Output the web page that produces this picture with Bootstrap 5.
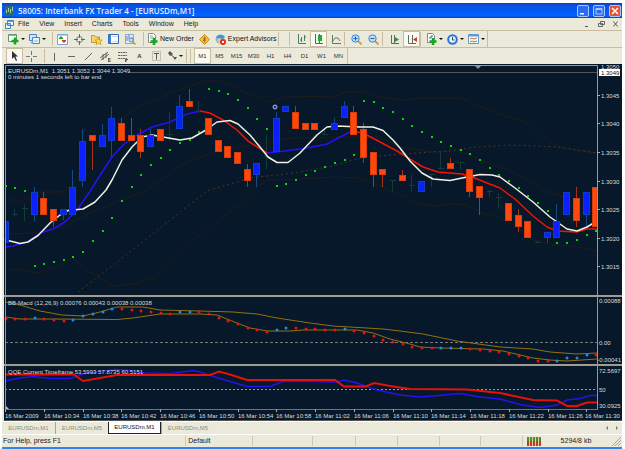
<!DOCTYPE html>
<html lang="en">
<head>
<meta charset="utf-8">
<meta name="viewport" content="width=device-width, initial-scale=1">
<title>Interbank FX Trader 4</title>
<link href="https://cdn.jsdelivr.net/npm/bootstrap@5.3.0/dist/css/bootstrap.min.css" rel="stylesheet">
<style>
:root{--face:#ebe9da;--edge:#c9bda0;--navy:#061829}
body{font-family:"Liberation Sans",sans-serif;font-size:7px;line-height:10px;color:#222;background:#fff;padding:3px 3px 0 2px}
button{border:0;background:none;padding:0;color:inherit;font:inherit;white-space:nowrap}
svg{display:block}
.titlebar{height:15px;background:linear-gradient(#0a3fc4 0,#0a55e6 3px,#0558ee 8px,#0064ff 11px,#0060fa 13px,#0440b8);color:#e4ecff;padding:0 1px 0 3px}
.titlebar h1{font-family:"Open Sans",sans-serif;font-size:8px;line-height:14px;margin:0;font-weight:600}
.winbtn{width:12px;height:12px;border:1px solid #a9c6ff;border-radius:2px;background:#2a6bf0}
.winbtn-close{background:#e4512f}
.menubar{height:12px;background:var(--face);padding:0 3px}
.menubar button{line-height:12px}
.menus{gap:10px}
.toolrow{height:17px;background:var(--face);padding-left:4px;border-top:1px solid var(--edge)}
.toolset{height:16px;border-right:1px solid var(--edge)}
.tool{width:17px;height:16px;display:flex;align-items:center;justify-content:center}
.tool-menu{width:21px;height:16px;display:flex;align-items:center;justify-content:center;gap:2px}
.tool-menu::after{content:"";border:2px solid transparent;border-top-color:#111;border-bottom:0}
.tool-text{height:16px;display:flex;align-items:center;gap:2px;padding:0 2px;color:#111}
.pressed{background:#f9f8f2;border:1px solid var(--edge)}
.frames .tool{font-size:6px;color:#333}
.sep{width:4px;height:14px;border-left:1px solid var(--edge)}
.sep-wide{width:11px}
.sep-tight{width:2px;margin-left:4px}
.charts{background:var(--face);padding-left:2px}
.charts svg{width:100%;height:auto;background:var(--navy)}
.charts text{font-size:6px;fill:#dcdcdc}
.tabstrip{height:13px;background:var(--face);border-top:1px solid #fff;font-size:6px;color:#8b8979}
.tabstrip button{width:53px;height:12px;line-height:11px}
.tabstrip button + button{border-left:1px solid #a9a696}
.tabstrip .tab-on{background:#fff;color:#111;border:1px solid #222;border-top:0}
.status{height:13px;background:var(--face);border-top:1px solid #fff}
.status > div{border-right:1px solid #cfc9b4;height:10px;white-space:nowrap}
.status > div:last-child{border-right:0}
.s-help{flex:188 1 0;padding-left:1px}.s-def{flex:66 1 0;padding-left:2px}.s-a{flex:61 1 0}.s-b{flex:43 1 0}.s-c{flex:42 1 0}.s-net{flex:97 1 0;padding:0 1px 0 4px}
.desk{height:2px;background:#3186ee}
</style>
</head>
<body>
<header>
 <div class="titlebar d-flex align-items-center gap-1">
  <svg width="9" height="9" viewBox="0 0 9 9"><path d="M0 0h9v9H0z" fill="#2c6d63"/><path d="M1 7V4h1v3zM3 6V2h1v4zM5 7V3h1v4zM7 5V1h1v4z" fill="#9fd0a8"/></svg>
  <h1 class="flex-grow-1">58005: Interbank FX Trader 4 - [EURUSDm,M1]</h1>
  <div class="d-flex gap-1">
   <button class="winbtn" aria-label="Minimize"><svg width="10" height="10"><path d="M2 7h4v1.500H2z" fill="#fff"/></svg></button>
   <button class="winbtn" aria-label="Restore"><svg width="10" height="10"><path d="M2 2.500h6v5.500H2zM2 3.500h6" fill="none" stroke="#a9cbff"/></svg></button>
   <button class="winbtn winbtn-close" aria-label="Close"><svg width="10" height="10"><path d="M2 2l6 6M8 2l-6 6" stroke="#fff" stroke-width="1.500"/></svg></button>
  </div>
 </div>
 <nav class="menubar d-flex align-items-center" aria-label="Main menu">
  <svg class="me-1" width="9" height="9" viewBox="0 0 9 9"><path d="M2.500.5h6v5h-6zM.5 3.500h5v5h-5z" fill="#f5faff" stroke="#3f7fc4"/><path d="M2.500 1.500h6M.5 4h5" stroke="#5d9ae0"/></svg>
  <div class="d-flex flex-grow-1 menus"><button>File</button><button>View</button><button>Insert</button><button>Charts</button><button>Tools</button><button>Window</button><button>Help</button></div>
  <div class="d-flex gap-2">
   <button aria-label="Minimize chart"><svg width="6" height="8"><path d="M1 6.500h3" stroke="#555"/></svg></button>
   <button aria-label="Restore chart"><svg width="7" height="8"><path d="M2.500 1.500h4v3h-4zM.5 3.500h4v3h-4z" fill="none" stroke="#666"/></svg></button>
   <button aria-label="Close chart"><svg width="6" height="8"><path d="M.5 1.500l4 5M4.500 1.500l-4 5" stroke="#555"/></svg></button>
  </div>
 </nav>
 <div class="toolrow d-flex" role="toolbar" aria-label="Standard">
  <div class="toolset d-flex align-items-center">
  <button class="tool-menu" aria-label="New chart"><svg width="11" height="12"><path d="M.5 1.500h8v7h-8z" fill="#fff" stroke="#5b9a68"/><path d="M1 2.500h7" stroke="#79b7e0"/><path d="M7 4.500v7M3.500 8h7" stroke="#12a71d" stroke-width="2.500"/></svg></button>
  <button class="tool-menu" aria-label="Profiles"><svg width="11" height="12"><path d="M.5 1.500h7v6h-7z" fill="#cfe5fa" stroke="#4a86c8"/><path d="M3.500 4.500h7v6h-7z" fill="#e8f3fd" stroke="#4a86c8"/><path d="M2 9h2v1H2zM5 8h4" fill="#3c7bd0" stroke="#8bb6e4"/></svg></button>
  <span class="sep sep-tight"></span>
  <button class="tool" aria-label="Market watch"><svg width="11" height="11"><path d="M.5.5h10v10H.5z" fill="#fff" stroke="#7ba6d2"/><path d="M1 1.500h9" stroke="#b8d5ef"/><path d="M2 4l2-2 2 2v1H2z" fill="#18a32e"/><path d="M5 6h4v1L7 9 5 7z" fill="#dd3524"/></svg></button>
  <button class="tool" aria-label="Data window"><svg width="11" height="11"><circle cx="5.500" cy="5.500" r="3" fill="none" stroke="#777"/><path d="M5.500 0v4M5.500 7v4M0 5.500h4M7 5.500h4" stroke="#666"/></svg></button>
  <button class="tool" aria-label="Navigator"><svg width="12" height="11"><path d="M.5 8.500v-7h3l1 1.500h4v5.500z" fill="#f8d775" stroke="#c89632"/><path d="M7.500 3.500l1 2.400 2.700.2-2 1.700.6 2.700-2.300-1.400-2.300 1.400.6-2.700-2-1.700 2.700-.2z" fill="#ffdf4c" stroke="#c08a16" stroke-width=".7"/></svg></button>
  <button class="tool" aria-label="Terminal"><svg width="11" height="10"><path d="M.5.5h10v9H.5z" fill="#fff" stroke="#2e6cbc"/><path d="M1 1h2v8H1z" fill="#3c82d8"/><path d="M4 2.500h6M4 7.500h6" stroke="#c8dcf2"/></svg></button>
  <button class="tool" aria-label="Strategy tester"><svg width="11" height="11"><path d="M.5.5h8v9h-8z" fill="#e4eef8" stroke="#86a8cb"/><path d="M2 2v5M4 1v4M7 3v3" stroke="#6080b0"/><circle cx="6" cy="6" r="2" fill="#cfe6fb" stroke="#5a87b4"/><path d="M7.500 7.500l3 3" stroke="#c29a2a" stroke-width="1.500"/></svg></button>
  <span class="sep sep-tight"></span>
  <button class="tool-text"><svg width="11" height="12"><path d="M1.500.5h5l2 2v7h-7z" fill="#fff" stroke="#7c8c86"/><path d="M3 3h3M3 5h4" stroke="#8ca08e"/><path d="M7 5v7M3.500 8.500h7" stroke="#12a71d" stroke-width="2.500"/></svg>New Order</button>
  <button class="tool" aria-label="MetaEditor"><svg width="11" height="11"><path d="M5.500.5l5 5-5 5-5-5z" fill="#f2c046" stroke="#c98b1c"/><path d="M5.500 2.500v6M4 4.500l3 2M7 4L4 7" stroke="#9a5a10" stroke-width=".8"/></svg></button>
  <button class="tool-text"><svg width="11" height="11"><circle cx="5" cy="5" r="4.500" fill="#86b8e6"/><path d="M1 4c2-4 7-4 9-1L7 5 3 4z" fill="#4e8fcf"/><path d="M2 6l3-2 2 2-3 3z" fill="#f0cd68"/><circle cx="8" cy="8" r="3" fill="#e2301e"/><path d="M7 7h2v2H7z" fill="#fff"/></svg>Expert Advisors</button>
  <span class="sep sep-wide"></span><span class="sep"></span>
  <button class="tool" aria-label="Bar chart"><svg width="10" height="11"><path d="M1.500 0v9.500H9M4.500 3v5M7.500 1v6M3 6h1M8 3h1" fill="none" stroke="#4d7d59"/></svg></button>
  <button class="tool pressed" aria-label="Candlesticks"><svg width="10" height="11"><path d="M1.500 0v9.500H9M5.500 0v9" fill="none" stroke="#3c7748"/><path d="M4 1h4v6H4z" fill="#18b22e"/></svg></button>
  <button class="tool" aria-label="Line chart"><svg width="10" height="11"><path d="M1.500 1v8.500H10M1 8l3-4 3 0 2 3" fill="none" stroke="#5b7d5e"/></svg></button>
  <span class="sep"></span>
  <button class="tool" aria-label="Zoom in"><svg width="11" height="11"><path d="M6.500 6.500l4 4" stroke="#d5a52e" stroke-width="2"/><circle cx="4.500" cy="4.500" r="3.700" fill="#b8dcfa" stroke="#4386d0"/><path d="M2.500 4.500h4M4.500 2.500v4" stroke="#2360b8"/></svg></button>
  <button class="tool" aria-label="Zoom out"><svg width="11" height="11"><path d="M6.500 6.500l4 4" stroke="#d5a52e" stroke-width="2"/><circle cx="4.500" cy="4.500" r="3.700" fill="#b8dcfa" stroke="#4386d0"/><path d="M2.500 4.500h4" stroke="#2360b8"/></svg></button>
  <span class="sep"></span>
  <button class="tool" aria-label="Auto scroll"><svg width="10" height="11"><path d="M1.500 1v8.500H9M4.500 1v8" fill="none" stroke="#5c6d60"/><path d="M5 3l4 2.500L5 8z" fill="#18a32e"/></svg></button>
  <button class="tool pressed" aria-label="Chart shift"><svg width="10" height="11"><path d="M1.500 1v8.500H9M5.500 1v8" fill="none" stroke="#5c6d60"/><path d="M10 3L6 5.500 10 8z" fill="#d43a22"/></svg></button>
  <span class="sep"></span>
  <button class="tool-menu" aria-label="Indicators"><svg width="11" height="12"><path d="M1.500.5h5l2 2v7h-7z" fill="#fff" stroke="#7c8c86"/><path d="M3 5h2v-2h2" fill="none" stroke="#557"/><path d="M7 5v7M3.500 8.500h7" stroke="#12a71d" stroke-width="2.500"/></svg></button>
  <button class="tool-menu" aria-label="Periods"><svg width="11" height="11"><circle cx="5.500" cy="5.500" r="4.300" fill="#eaf4ff" stroke="#2d72cf" stroke-width="2"/><path d="M5.500 3v3h2" fill="none" stroke="#345"/></svg></button>
  <button class="tool-menu" aria-label="Templates"><svg width="11" height="10"><path d="M.5.5h10v9H.5z" fill="#fff" stroke="#6b96c4"/><path d="M1 1.500h9" stroke="#5a9ae0" stroke-width="2"/><path d="M2 5l2-1 2 1 3-1" fill="none" stroke="#d4643a"/><path d="M2 8l2-1 2 1 3-1" fill="none" stroke="#41a355"/></svg></button>
  </div>
 </div>
 <div class="toolrow d-flex" role="toolbar" aria-label="Drawing and periods">
  <div class="toolset frames d-flex align-items-center">
  <button class="tool pressed" aria-label="Cursor"><svg width="8" height="11"><path d="M1 0v8l2-2 2 4 1-.5-1.500-4H7z" fill="#333"/></svg></button>
  <button class="tool" aria-label="Crosshair"><svg width="11" height="11"><path d="M5.500 0v4M5.500 7v4M0 5.500h4M7 5.500h4" stroke="#777"/></svg></button>
  <span class="sep sep-tight"></span>
  <button class="tool" aria-label="Vertical line"><svg width="9" height="9"><path d="M4.500 1v8" stroke="#666"/></svg></button>
  <button class="tool" aria-label="Horizontal line"><svg width="9" height="9"><path d="M1 4.500h7" stroke="#666"/></svg></button>
  <button class="tool" aria-label="Trendline"><svg width="9" height="9"><path d="M1 8l7-7" stroke="#666"/></svg></button>
  <button class="tool" aria-label="Equidistant channel"><svg width="11" height="11"><path d="M0 7l8-6M1 9l8-6M3 3v6M6 2v5M8.500 7.500h2M8.500 9h2M8.500 10.500h2M8.500 7v4" stroke="#555" stroke-width=".9"/></svg></button>
  <button class="tool" aria-label="Fibonacci retracement"><svg width="10" height="11"><path d="M0 1.500h9M0 4.500h9M0 7.500h9" stroke="#666" stroke-dasharray="2 .5"/><path d="M7.500 11V8.500H10M7.500 10H9" fill="none" stroke="#555"/></svg></button>
  <button class="tool fw-bold">A</button>
  <button class="tool" aria-label="Text label"><svg width="9" height="10"><path d="M.5.5h8v9h-8z" fill="none" stroke="#999" stroke-dasharray="1 1"/><path d="M2 2.500h5M4.500 2.500v6" stroke="#555"/></svg></button>
  <button class="tool-menu" aria-label="Arrows"><svg width="9" height="10"><path d="M0 2l2-2 3 3-3 2zM5 6h4L7 9z" fill="#555"/><path d="M2 3l5 4" stroke="#555"/></svg></button>
  <span class="sep"></span><span class="sep"></span>
  <button class="tool pressed">M1</button><button class="tool">M5</button><button class="tool">M15</button><button class="tool">M30</button><button class="tool">H1</button><button class="tool">H4</button><button class="tool">D1</button><button class="tool">W1</button><button class="tool">MN</button>
  </div>
 </div>
</header>

<main class="charts">
 <svg viewBox="4 64 618 233" role="img" aria-label="EURUSDm M1 price chart">
  <g fill="none" stroke="#221c18">
   <path d="M5 197L17 202 27 198 35 192H63L78 178 92 155 117 122 133 110 150 102 167 95 187 87 205 81 218 81 230 84 250 95 270 102 287 96 333 97 347 92H363L387 98 400 100 423 98H460L473 103 500 115 520 120 530 125 543 138 560 147 575 150 597 153"/>
   <path d="M5 270L17 269 37 273 57 267 72 258 90 272 113 286 133 284 157 277 173 262 190 243 210 227 235 208 247 198 257 187 267 180 300 179 333 177 360 178 383 187 400 195 417 203 432 206 450 204 467 205 483 213 500 218 517 227 533 240 550 244 577 247 597 251"/>
   <path d="M5 234L33 233 63 227 90 213 147 190 180 166 200 157 220 150 267 143 290 138 343 137 380 137 400 147 433 152 460 151 483 161 507 170 527 180 550 193 567 198"/>
   <path d="M78 292L117 262 160 228 207 191 220 187 250 178 293 173 333 166 360 158 400 154 447 151 477 147 510 145 557 147 597 153" stroke="#4a3524" stroke-dasharray="2 3"/>
  </g>
  <g id="wicks"></g>
  <g fill="none" stroke-width="1.500" stroke-linejoin="round">
   <path stroke="#2a10f0" d="M5 247L13 246 27 242 40 233 53 229 65 222 77 210 91 190 97 180 112 157 123 145 137 135 152 127 170 122 187 114 200 111M267 153L285 151 307 148 327 144 340 137 350 132 354 131.500"/>
   <path stroke="#f01408" d="M200 111L210 113 223 120 237 130 248 141 267 153M354 131.500L363 133 380 142 397 151 410 159 423 167 438 172 462 174 472 177 487 183 500 188 515 199 533 216 547 227 557 231 577 232 587 229 597 229"/>
   <path stroke="#f4f0e4" d="M5 239L8 240.500 20 243.500 28 242 38 235.500 50 223 60 215 68 210.500 83 209 95 202 106 190 112 180 122 160 132 147 142 137 152 135 163 137 180 140 192 138 206 130 217 122 230 120.500 238 124 250 135 260 147 268 157 277 162.500H288L300 153 317 135 327 127 337 126 360 127H373L383 130.500 393 140 400 148 410 161 422 173 433 179 450 180.500 467 177 480 174.500 492 175 500 177 515 188 533 202 550 217 567 229 577 231 587 227 597 221"/>
  </g>
  <g id="bodies"></g>
  <g id="sar" fill="#08d808"></g>
  <circle cx="275" cy="107" r="2" fill="#2020d0" stroke="#bbb"/>
  <path d="M5 72.500H598" stroke="#555"/>
  <path d="M475 66h6l-3 3z" fill="#8c9099"/>
  <path d="M5.500 297V65.500H597.500V297" fill="none" stroke="#9a9890"/>
  <path d="M4 296H622" stroke="#a09c90" stroke-width="2"/>
  <path d="M597 95.500h3M597 123.500h3M597 152.500h3M597 181.500h3M597 209.500h3M597 238.500h3M597 266.500h3" stroke="#aaa"/>
  <text x="601" y="69">1.3050</text>
  <path d="M599 69h21v7h-21z" fill="#fff"/><text x="601" y="75" style="fill:#111">1.3049</text>
  <text x="601" y="98">1.3045</text><text x="601" y="126">1.3040</text><text x="601" y="155">1.3035</text><text x="601" y="184">1.3030</text><text x="601" y="212">1.3025</text><text x="601" y="241">1.3020</text><text x="601" y="269">1.3015</text>
  <path d="M7 67h121v7H7z" fill="#061829"/>
  <text x="8" y="73">EURUSDm,M1&#160; 1.3051 1.3052 1.3044 1.3049</text>
  <text x="8" y="79">0 minutes 1 seconds left to bar end</text>
 </svg>
 <svg viewBox="4 297 618 69" role="img" aria-label="BB-Macd indicator">
  <path d="M5 342.500H598" stroke="#77797a" stroke-dasharray="3 2"/>
  <g fill="none" stroke="#94710c">
   <path d="M5 302L20 305 40 311 62 315 83 316 100 312 117 307 143 307 160 310 200 311 233 312 257 314 277 318 310 323 333 326 383 329 400 331 423 334 457 341 500 347 533 349 550 352 577 354 597 353"/>
   <path d="M5 317L20 319H53L117 319.500 133 318 160 314H200L217 315 237 323 250 328 267 331H290L303 330H357L373 333 390 339 410 344 420 347 440 348 483 349 503 351 533 358 550 360 567 361 597 359"/>
  </g>
  <g id="macd"></g>
  <path d="M5.500 297V366M597.500 297V366" stroke="#9a9890"/>
  <path d="M4 365H622" stroke="#a09c90" stroke-width="2"/>
  <text x="8" y="305">BB-Macd (12,26,9) 0.00076 0.00043 0.00038 0.00038</text>
  <text x="599" y="303">0.00088</text><text x="599" y="345">0.00</text><text x="621" y="362" text-anchor="end">-0.00041</text>
 </svg>
 <svg viewBox="4 366 618 55" role="img" aria-label="QQE indicator">
  <path d="M5 389.500H598" stroke="#a0a0a0" stroke-dasharray="2 2"/>
  <path fill="none" stroke="#2412f0" stroke-width="1.500" d="M5 381L20 378 33 376.500 50 378.500H70L83 374 115 369.500 130 370.500 145 373 170 373.500 193 370.500 200 372 215 377 247 386.500H270L283 381.500H305L337 382 344 380 357 383 377 390 400 395 420 397 433 396 460 393.500 480 397 500 399 520 404.500 540 407.500 557 405 567 400 580 398.500 590 395.500H597"/>
  <path fill="none" stroke="#e81008" stroke-width="2" d="M5 374.500H74L83 381 117 375H210L219 371.500 230 374.500 247 380H335L344 386.500H366L374 383 390 386 410 389 467 389.500 500 393 533 400 557 400.500 567 406H577L587 402.500H597"/>
  <text x="8" y="374">QQE Current Timeframe 53.5993 57.8735 60.5151</text>
  <path d="M5.500 366V409.500M597.500 366V409.500" stroke="#9a9890"/><path d="M5 409.500H598" stroke="#77736c"/>
  <path d="M6 406v3h3z" fill="#bbb"/>
  <text x="599" y="373">72.5697</text><text x="599" y="392">50</text><text x="599" y="408">30.0925</text>
  <g id="times"></g>
  <path d="M4 420.500H622" stroke="#555"/>
 </svg>
</main>

<footer>
 <div class="tabstrip d-flex" role="tablist">
  <button role="tab">EURUSDm,M1</button><button role="tab">EURUSDm,M5</button><button role="tab" class="tab-on" aria-selected="true">EURUSDm,M1</button><button role="tab">EURUSDm,M5</button>
  <span class="flex-grow-1"></span>
  <svg width="20" height="12"><path d="M6 4v4L4 6zM14 4v4l2-2z" fill="#777"/></svg>
 </div>
 <div class="status d-flex align-items-center">
  <div class="s-help">For Help, press F1</div><div class="s-def">Default</div><div class="s-a"></div><div class="s-b"></div><div class="s-c"></div><div class="s-c"></div><div class="s-c"></div><div class="s-c"></div>
  <div class="s-net d-flex align-items-center justify-content-between">
   <svg width="14" height="9"><path d="M0 0h14v4H0z" fill="#4f8e2e"/><path d="M0 4h14v5H0z" fill="#c43a22"/><path d="M2.500 0v9M5.500 0v9M8.500 0v9M11.500 0v9" stroke="#d8d0a8"/></svg>
   <span>5294/8 kb</span>
   <svg width="10" height="10"><path d="M1 10l9-9M4 10l6-6M7 10l3-3" stroke="#aca899"/></svg>
  </div>
 </div>
 <div class="desk"></div>
</footer>
<script src="https://cdn.jsdelivr.net/npm/bootstrap@5.3.0/dist/js/bootstrap.bundle.min.js"></script>
<script>
// One row per minute: kind (b = up, o = down, d = doji), body top, body bottom, high, low
const candles = [
 'b 221 243 209 243','d 215 215 209 216','d 209 209 204 221','b 192 215 187 221','o 198 215 192 215','o 209 221 209 227','b 209 215 209 220','b 187 215 170 215',
 'b 141 181 129 187','o 135 141 135 170','b 135 147 124 147','b 118 141 107 157','o 123 141 118 141','o 135 141 118 141','o 135 152 129 158','b 135 147 129 147',
 'o 129 141 129 141','d 135 135 112 141','b 106 129 95 129','o 101 107 89 107','d 112 112 101 113','o 118 135 118 135','o 140 152 140 152','o 146 158 146 158',
 'o 152 164 152 164','o 169 181 164 187','b 163 175 163 187','d 157 157 135 169','b 118 152 112 152','b 106 112 106 112','o 112 129 106 129','o 123 130 123 130',
 'o 123 130 123 130','d 135 135 129 135','b 123 130 118 130','b 106 118 101 118','o 112 135 106 135','o 129 158 123 163','o 152 175 152 187','o 169 175 169 187',
 'd 181 181 181 191','o 175 181 170 181','d 186 186 175 192','b 181 192 181 192','d 175 175 175 187','d 169 169 151 169','o 163 169 158 169','d 163 163 163 169',
 'o 169 192 169 197','o 186 198 186 215','d 192 192 190 197','d 198 198 193 209','o 203 221 203 221','o 215 227 209 232','o 221 238 221 238','d 243 243 240 243',
 'b 232 238 232 243','b 221 238 204 238','b 192 215 192 215','o 198 221 187 227','b 192 215 192 227','o 187 227 187 227'];
const sar = [186,188,191,266,264,262,260,257,252,241,231,218,201,187,175,165,158,150,143,140,132,89,91,94,100,108,119,129,186,184,180,175,171,167,163,160,155,101,102,108,112,119,126,132,137,142,146,150,154,160,168,175,181,188,196,203,211,243,243,240,235,231];
const macd = 'r319 r319 r319 b318 r319 r320 r321 b320 b316 b314 b312 b309 r309 r310 r311 r312 r313 r314 b312 b312 r312 r314 r318 r321 r324 r328 r330 r332 b330 b328 r328 r329 r329 r330 r330 b329 r331 r333 r336 r340 r342 r344 r347 r348 r348 b348 b348 b348 r349 r350 r351 r352 r354 r356 r358 r361 r361 b361 b358 b358 b355 r355'.split(' ');
const px = i => Math.round(5.7 + 9.68 * i);
const put = (id, s) => document.getElementById(id).innerHTML = s;
const wickColor = {b: '#144a82', o: '#a83414', d: '#123c38'};
let wicks = '', bodies = '';
candles.forEach((row, i) => {
  const [k, t, b, h, l] = row.split(' ');
  const x = px(i);
  wicks += `<path d="M${x - .5} ${h}V${l}" stroke="${wickColor[k]}"/>`;
  if (k === 'd') { wicks += `<path d="M${x - 3} ${t - .5}h6" stroke="${wickColor.d}"/>`; return; }
  const left = Math.max(x - 3.5, 6), right = Math.min(x + 2.5, 597);
  bodies += `<rect x="${left}" y="${+t + .5}" width="${right - left}" height="${b - t - 1}" fill="${k === 'b' ? '#0a20ff' : '#ff480c'}" stroke="${k === 'b' ? '#0f3fc0' : '#d83c0c'}"/>`;
});
put('wicks', wicks);
put('bodies', bodies);
put('sar', sar.map((y, i) => `<rect x="${px(i) - 1}" y="${y - 1}" width="2" height="2"/>`).join(''));
put('macd', macd.map((m, i) => `<circle cx="${px(i)}" cy="${m.slice(1)}" r="1.500" fill="${m[0] === 'r' ? '#f01010' : '#2088f0'}"/>`).join(''));
const labels = ['2009','10:34','10:38','10:42','10:46','10:50','10:54','10:58','11:02','11:06','11:10','11:14','11:18','11:22','11:26','11:30'];
put('times', labels.map((t, k) => {
  const x = Math.round(5 + 38.75 * k);
  return `<path d="M${x + .5} 409v3" stroke="#aaa"/><text x="${Math.min(x, 585)}" y="418">16 Mar ${t}</text>`;
}).join(''));
</script>
</body>
</html>
